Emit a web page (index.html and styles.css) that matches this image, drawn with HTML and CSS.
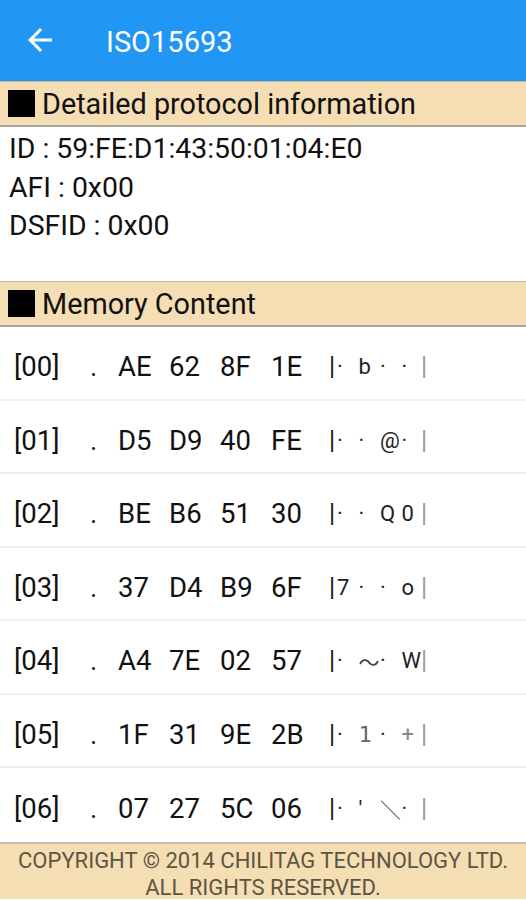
FILE: index.html
```html
<!DOCTYPE html>
<html lang="en">
<head>
  <meta charset="UTF-8" />
  <title>ISO15693</title>
  <meta name="viewport" content="width=device-width, initial-scale=1.0" />
  <link rel="stylesheet" href="styles.css">
</head>
<body>

<header class="toolbar">
  <svg class="back-icon" viewBox="0 0 24 24" width="36" height="36">
    <path d="M20 11H7.83l5.59-5.59L12 4l-8 8 8 8 1.41-1.41L7.83 13H20v-2z" fill="#fff" />
  </svg>
  <span class="toolbar-title">ISO15693</span>
</header>

<div class="section-head"><span class="square"></span>Detailed protocol information</div>

<div class="info">
  <div class="info-line">ID : 59:FE:D1:43:50:01:04:E0</div>
  <div class="info-line">AFI : 0x00</div>
  <div class="info-line">DSFID : 0x00</div>
</div>

<div class="section-head"><span class="square"></span>Memory Content</div>

<div class="memory">
  <div class="mem-row">
    <span class="idx">[00]</span><span class="dot">.</span>
    <span class="hex">AE</span><span class="hex">62</span><span class="hex">8F</span><span class="hex">1E</span>
    <span class="ascii"><span class="bar">|</span><span class="ch">·</span><span class="ch">b</span><span class="ch">·</span><span class="ch">·</span><span class="bar end">|</span></span>
  </div>
  <div class="mem-row">
    <span class="idx">[01]</span><span class="dot">.</span>
    <span class="hex">D5</span><span class="hex">D9</span><span class="hex">40</span><span class="hex">FE</span>
    <span class="ascii"><span class="bar">|</span><span class="ch">·</span><span class="ch">·</span><span class="ch">@</span><span class="ch">·</span><span class="bar end">|</span></span>
  </div>
  <div class="mem-row">
    <span class="idx">[02]</span><span class="dot">.</span>
    <span class="hex">BE</span><span class="hex">B6</span><span class="hex">51</span><span class="hex">30</span>
    <span class="ascii"><span class="bar">|</span><span class="ch">·</span><span class="ch">·</span><span class="ch">Q</span><span class="ch">0</span><span class="bar end">|</span></span>
  </div>
  <div class="mem-row">
    <span class="idx">[03]</span><span class="dot">.</span>
    <span class="hex">37</span><span class="hex">D4</span><span class="hex">B9</span><span class="hex">6F</span>
    <span class="ascii"><span class="bar">|</span><span class="ch">7</span><span class="ch">·</span><span class="ch">·</span><span class="ch">o</span><span class="bar end">|</span></span>
  </div>
  <div class="mem-row">
    <span class="idx">[04]</span><span class="dot">.</span>
    <span class="hex">A4</span><span class="hex">7E</span><span class="hex">02</span><span class="hex">57</span>
    <span class="ascii"><span class="bar">|</span><span class="ch">·</span><span class="ch wide">～</span><span class="ch">·</span><span class="ch">W</span><span class="bar end">|</span></span>
  </div>
  <div class="mem-row">
    <span class="idx">[05]</span><span class="dot">.</span>
    <span class="hex">1F</span><span class="hex">31</span><span class="hex">9E</span><span class="hex">2B</span>
    <span class="ascii"><span class="bar">|</span><span class="ch">·</span><span class="ch mono">1</span><span class="ch">·</span><span class="ch faint">+</span><span class="bar end">|</span></span>
  </div>
  <div class="mem-row">
    <span class="idx">[06]</span><span class="dot">.</span>
    <span class="hex">07</span><span class="hex">27</span><span class="hex">5C</span><span class="hex">06</span>
    <span class="ascii"><span class="bar">|</span><span class="ch">·</span><span class="ch">'</span><span class="ch wide">＼</span><span class="ch">·</span><span class="bar end">|</span></span>
  </div>
</div>

<footer class="copyright">
  COPYRIGHT © 2014 CHILITAG TECHNOLOGY LTD.<br />
  ALL RIGHTS RESERVED.
</footer>

</body>
</html>
```

FILE: styles.css
```css
body {
  font-family: Roboto, "Noto Sans", sans-serif;
  margin: 0;
  background: #fff;
  color: #111;
}

.toolbar {
  background: #2196F3;
  height: 81px;
  display: flex;
  align-items: center;
  color: #fff;
}

.back-icon {
  margin-left: 22px;
  margin-top: -1px;
}

.toolbar-title {
  margin-left: 48px;
  font-size: 29px;
  font-weight: 400;
  padding-top: 2px;
}

.section-head {
  background: #F5DEB3;
  border-top: 1px solid #c9bb9c;
  border-bottom: 2px solid #a9a59c;
  height: 43px;
  display: flex;
  align-items: center;
  font-size: 28.8px;
  padding-left: 8px;
}

.square {
  width: 27px;
  height: 27px;
  background: #000;
  margin-right: 7px;
}

.info {
  height: 154px;
  padding: 3px 0 0 9px;
  box-sizing: border-box;
}

.info-line {
  font-size: 28.4px;
  line-height: 38.5px;
}

.mem-row {
  height: 73.5px;
  box-sizing: border-box;
  border-bottom: 2px solid #f0f0f0;
  display: flex;
  align-items: center;
  padding: 8px 0 0 14px;
  font-size: 27.5px;
}

.mem-row:last-child {
  border-bottom: none;
}

.idx {
  width: 76px;
}

.dot {
  width: 28px;
}

.hex {
  width: 51px;
}

.hex:nth-child(6) {
  width: 58px;
}

.ascii {
  display: flex;
  align-items: center;
  font-size: 22px;
  color: #222;
}

.bar {
  width: 6px;
  font-size: 25px;
  color: #111;
}

.bar.end {
  color: #9a9a9a;
  width: auto;
}

.ch {
  width: 21.5px;
  padding-left: 2px;
  box-sizing: border-box;
}

.ch.wide {
  font-family: "Noto Sans CJK JP", sans-serif;
  font-size: 21px;
  color: #444;
}

.ch.mono {
  font-family: "DejaVu Sans Mono", monospace;
  color: #666;
}

.ch.faint {
  color: #888;
}

.copyright {
  background: #F5DEB3;
  border-top: 2px solid #c4c0b8;
  text-align: center;
  font-size: 22px;
  line-height: 27px;
  color: #5d5543;
  padding-top: 3px;
  height: 57px;
  box-sizing: border-box;
}
```
